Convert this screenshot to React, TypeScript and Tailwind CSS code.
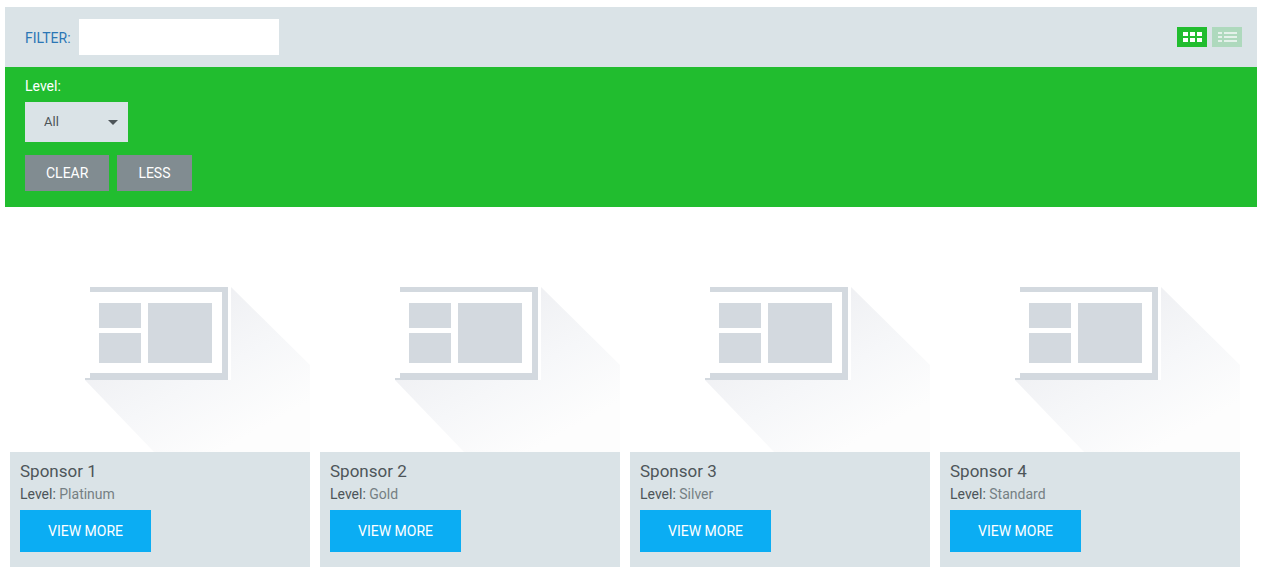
import { useState } from 'react';

interface Sponsor {
  id: number;
  name: string;
  level: string;
}

const sponsors: Sponsor[] = [
  { id: 1, name: 'Sponsor 1', level: 'Platinum' },
  { id: 2, name: 'Sponsor 2', level: 'Gold' },
  { id: 3, name: 'Sponsor 3', level: 'Silver' },
  { id: 4, name: 'Sponsor 4', level: 'Standard' },
];

const GridIcon = () => (
  <svg width="30" height="20" viewBox="0 0 30 20" fill="#fff" shapeRendering="crispEdges" aria-hidden="true">
    <path d="M6 5h5v4H6zM13 5h5v4h-5zM20 5h5v4h-5zM6 11h5v4H6zM13 11h5v4h-5zM20 11h5v4h-5z" />
  </svg>
);

const ListIcon = () => (
  <svg width="30" height="20" viewBox="0 0 30 20" fill="#e4f1ea" shapeRendering="crispEdges" aria-hidden="true">
    <path d="M6 5h4v2H6zM12 5h13v2H12zM6 9h4v2H6zM12 9h13v2H12zM6 13h4v2H6zM12 13h13v2H12z" />
  </svg>
);

// Default artwork for sponsors without a logo
const Placeholder = ({ id }: { id: number }) => (
  <svg viewBox="0 0 300 225" className="block w-full" aria-hidden="true">
    <defs>
      <linearGradient id={`shade-${id}`} gradientUnits="userSpaceOnUse" x1="175" y1="80" x2="245" y2="205">
        <stop offset="0" stopColor="#eff0f3" />
        <stop offset="0.5" stopColor="#f6f7f9" />
        <stop offset="1" stopColor="#fdfdfd" />
      </linearGradient>
    </defs>
    <path d="M221 60L300 138V225H144L75 153H221Z" fill={`url(#shade-${id})`} />
    <g fill="#d3d9df">
      <path d="M80 60H218V153H75V151H80V146H212V65H80Z" />
      <rect x="89" y="76" width="42" height="25" />
      <rect x="89" y="106" width="42" height="30" />
      <rect x="138" y="76" width="64" height="60" />
    </g>
  </svg>
);

const SponsorCard = ({ sponsor }: { sponsor: Sponsor }) => (
  <article className="w-[300px]">
    <Placeholder id={sponsor.id} />
    <div className="bg-[#dae3e7] px-[10px] pt-2 pb-[15px]">
      <h2 className="mb-0.5 text-[17px] leading-[22px] text-[#4d5559]">{sponsor.name}</h2>
      <p className="mb-1.5 text-sm leading-5 text-[#757f83]">
        <span className="text-[#4d5559]">Level:</span> {sponsor.level}
      </p>
      <button type="button" className="h-[42px] bg-[#0badf3] px-7 text-sm text-white">
        VIEW MORE
      </button>
    </div>
  </article>
);

export default function App() {
  const [filter, setFilter] = useState('');
  const [level, setLevel] = useState('All');

  const visible = sponsors.filter(
    (s) => s.name.toLowerCase().includes(filter.toLowerCase()) && (level === 'All' || s.level === level)
  );

  const handleClear = () => {
    setFilter('');
    setLevel('All');
  };

  return (
    <main className="bg-white pt-[7px] pr-[9px] pl-[5px] font-[Roboto,sans-serif]">
      {/* Filter bar */}
      <div className="flex items-center justify-between bg-[#dae3e7] py-3 pr-[15px] pl-5">
        <div className="flex items-center gap-2">
          <label htmlFor="filter" className="pt-0.5 text-sm text-[#2b76b5]">
            FILTER:
          </label>
          <input
            id="filter"
            type="text"
            value={filter}
            onChange={(e) => setFilter(e.target.value)}
            className="h-9 w-[200px] bg-white px-3 text-sm text-[#4d5559] outline-none"
          />
        </div>
        <div className="flex gap-[5px]">
          <button type="button" aria-label="Grid view" className="bg-[#21bd2f]">
            <GridIcon />
          </button>
          <button type="button" aria-label="List view" className="bg-[#aed9bd]">
            <ListIcon />
          </button>
        </div>
      </div>

      {/* Advanced filters */}
      <div className="bg-[#21bd2f] px-5 pt-[9px] pb-4">
        <label htmlFor="level" className="block text-sm leading-5 text-white">
          Level:
        </label>
        <div className="relative mt-1.5 w-[103px]">
          <select
            id="level"
            value={level}
            onChange={(e) => setLevel(e.target.value)}
            className="block h-10 w-full appearance-none bg-[#dae3e7] pl-[19px] text-[13px] text-[#4d5559] outline-none"
          >
            <option>All</option>
            {sponsors.map((s) => (
              <option key={s.id}>{s.level}</option>
            ))}
          </select>
          <svg
            width="10"
            height="5"
            viewBox="0 0 10 5"
            fill="#4d5559"
            className="pointer-events-none absolute top-[18px] right-[10px]"
            aria-hidden="true"
          >
            <path d="M0 0h10L5 5z" />
          </svg>
        </div>
        <div className="mt-[13px] flex gap-2">
          <button type="button" onClick={handleClear} className="h-9 bg-[#818c91] px-[21px] text-sm text-white">
            CLEAR
          </button>
          <button type="button" className="h-9 bg-[#818c91] px-[21px] text-sm text-white">
            LESS
          </button>
        </div>
      </div>

      {/* Results */}
      <div className="flex flex-wrap gap-[10px] px-[5px] pt-5">
        {visible.map((s) => (
          <SponsorCard key={s.id} sponsor={s} />
        ))}
      </div>
    </main>
  );
}
